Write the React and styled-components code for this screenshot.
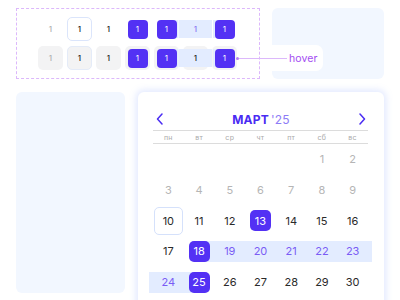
import React from 'react';
import styled, { createGlobalStyle } from 'styled-components';

const PURPLE = '#5331f4';
const BAND = '#e3ecff';
const PANEL = '#f2f7ff';

const GlobalStyle = createGlobalStyle`
  body {
    margin: 0;
    background: #fff;
    font-family: Inter, "Noto Sans", sans-serif;
  }
`;

const Page = styled.div`
  width: 400px;
  height: 300px;
  overflow: hidden;
  box-sizing: border-box;
  padding: 8px 16px 0;
`;

const TopRow = styled.div`
  position: relative;
  display: flex;
  gap: 12px;
  height: 71px;
`;

const DemoBox = styled.div`
  width: 244px;
  box-sizing: border-box;
  border: 1px dashed #dcb8fb;
  padding: 8px 0 0 21px;
  display: flex;
  flex-direction: column;
  gap: 5px;
`;

const DemoRow = styled.div`
  display: flex;
  gap: 4px;
`;

const bandBg = (band, h) => {
  if (band === 'start') return `linear-gradient(${BAND}, ${BAND}) right center / 50% ${h}px no-repeat`;
  if (band === 'end') return `linear-gradient(${BAND}, ${BAND}) left center / 50% ${h}px no-repeat`;
  if (band === 'mid') return BAND;
  return 'none';
};

const DemoCell = styled.div`
  width: 25px;
  height: 24px;
  box-sizing: border-box;
  border-radius: 5px;
  display: flex;
  align-items: center;
  justify-content: center;
  background: ${(p) => bandBg(p.$band, 18)}, ${(p) => (p.$boxed ? '#f3f3f4' : 'transparent')};
  border: 1px solid ${(p) => (p.$outlined ? (p.$boxed ? '#e4ebf8' : '#dbe5fb') : 'transparent')};
`;

const DemoNum = styled.span`
  font-size: 8px;
  font-weight: 500;
  color: ${(p) => (p.$muted ? '#b0b0b0' : '#1c1c1c')};
`;

const DemoMark = styled.span`
  width: 20px;
  height: 19px;
  border-radius: 4px;
  background: ${PURPLE};
  color: #fff;
  font-size: 8px;
  display: flex;
  align-items: center;
  justify-content: center;
`;

const DemoBand = styled.span`
  flex: none;
  width: 33px;
  margin: 0 -4px;
  height: 18px;
  background: ${BAND};
  color: ${(p) => (p.$boxed ? '#1c1c1c' : '#8a78f2')};
  font-size: 8px;
  font-weight: 500;
  display: flex;
  align-items: center;
  justify-content: center;
`;

const SidePanel = styled.div`
  flex: 1;
  background: ${PANEL};
  border-radius: 6px;
`;

const Pill = styled.div`
  position: absolute;
  left: 256px;
  top: 37px;
  width: 51px;
  height: 26px;
  background: #fff;
  border-radius: 0 7px 7px 0;
`;

const Pointer = styled.div`
  position: absolute;
  left: 220px;
  top: 42px;
  height: 16px;
  display: flex;
  align-items: center;
`;

const Dot = styled.span`
  width: 3px;
  height: 3px;
  border-radius: 50%;
  background: #b57cf5;
`;

const Line = styled.span`
  width: 48px;
  height: 1px;
  background: #dcb8fb;
  margin-right: 2px;
`;

const Label = styled.span`
  font-size: 10.5px;
  color: #a34cf2;
  letter-spacing: 0.1px;
`;

const BottomRow = styled.div`
  display: flex;
  gap: 13px;
  margin-top: 13px;
`;

const LeftPanel = styled.div`
  width: 109px;
  height: 201px;
  background: ${PANEL};
  border-radius: 6px;
`;

const Card = styled.div`
  width: 246px;
  height: 230px;
  box-sizing: border-box;
  background: #fff;
  border-radius: 6px;
  box-shadow: 0 0 7px 2px rgba(120, 150, 255, 0.22);
  padding: 21px 16px 0 15px;
`;

const Header = styled.div`
  display: flex;
  align-items: center;
  justify-content: space-between;
  height: 12px;
  padding: 0 2px 0 3px;
  margin-bottom: 5px;
`;

const Title = styled.div`
  font-size: 12px;
  font-weight: 700;
  color: #4a2cf3;
  letter-spacing: 0.2px;

  span {
    font-weight: 400;
    color: #8d7cf6;
    margin-left: 2px;
  }
`;

const Arrow = ({ dir }) => (
  <svg width="7" height="12" viewBox="0 0 7 12">
    <path
      d={dir === 'left' ? 'M6 1 L1.5 6 L6 11' : 'M1 1 L5.5 6 L1 11'}
      fill="none"
      stroke="#4a2cf3"
      strokeWidth="1.5"
      strokeLinecap="round"
      strokeLinejoin="round"
    />
  </svg>
);

const Weekdays = styled.div`
  display: grid;
  grid-template-columns: repeat(7, 1fr);
  border-top: 1px solid #dcdcdc;
  border-bottom: 1px solid #dcdcdc;
  height: 12px;
  align-items: center;
  font-size: 7px;
  letter-spacing: 0.3px;
  color: #aaa;
  text-align: center;
`;

const Dates = styled.div`
  display: grid;
  grid-template-columns: repeat(7, 1fr);
  grid-auto-rows: 30.7px;
`;

const Cell = styled.div`
  display: flex;
  align-items: center;
`;

const Band = styled.div`
  width: 100%;
  height: 21px;
  display: flex;
  align-items: center;
  justify-content: center;
  background: ${(p) => bandBg(p.$band, 21)};
  box-shadow: ${(p) => (p.$edge === 'right' ? `4px 0 0 ${BAND}` : p.$edge === 'left' ? `-4px 0 0 ${BAND}` : 'none')};
`;

const Num = styled.span`
  font-size: 11px;
  display: flex;
  align-items: center;
  justify-content: center;
  box-sizing: border-box;
  color: ${(p) => ({ muted: '#b5b5b5', band: '#7a5cf5', mark: '#fff' }[p.$kind] || '#2a2a2a')};
  ${(p) => p.$kind === 'mark' && `
    width: 21px;
    height: 21px;
    border-radius: 5px;
    background: ${PURPLE};
  `}
  ${(p) => p.$kind === 'today' && `
    width: 29px;
    height: 28px;
    border-radius: 5px;
    border: 1px solid #d5e1fb;
  `}
`;

const weekdays = ['пн', 'вт', 'ср', 'чт', 'пт', 'сб', 'вс'];

const days = [
  ...Array(5).fill(null),
  { n: 1, kind: 'muted' },
  { n: 2, kind: 'muted' },
  ...[3, 4, 5, 6, 7, 8, 9].map((n) => ({ n, kind: 'muted' })),
  { n: 10, kind: 'today' },
  { n: 11 },
  { n: 12 },
  { n: 13, kind: 'mark' },
  { n: 14 },
  { n: 15 },
  { n: 16 },
  { n: 17 },
  { n: 18, kind: 'mark', band: 'start' },
  { n: 19, kind: 'band', band: 'mid' },
  { n: 20, kind: 'band', band: 'mid' },
  { n: 21, kind: 'band', band: 'mid' },
  { n: 22, kind: 'band', band: 'mid' },
  { n: 23, kind: 'band', band: 'mid', edge: 'right' },
  { n: 24, kind: 'band', band: 'mid', edge: 'left' },
  { n: 25, kind: 'mark', band: 'end' },
  { n: 26 },
  { n: 27 },
  { n: 28 },
  { n: 29 },
  { n: 30 },
];

const DemoStates = ({ boxed }) => (
  <DemoRow>
    <DemoCell $boxed={boxed}><DemoNum $muted>1</DemoNum></DemoCell>
    <DemoCell $boxed={boxed} $outlined><DemoNum>1</DemoNum></DemoCell>
    <DemoCell $boxed={boxed}><DemoNum>1</DemoNum></DemoCell>
    <DemoCell $boxed={boxed}><DemoMark>1</DemoMark></DemoCell>
    <DemoCell $boxed={boxed} $band="start"><DemoMark>1</DemoMark></DemoCell>
    <DemoCell $boxed={boxed}><DemoBand $boxed={boxed}>1</DemoBand></DemoCell>
    <DemoCell $boxed={boxed} $band="end"><DemoMark>1</DemoMark></DemoCell>
  </DemoRow>
);

const App = () => (
  <>
    <GlobalStyle />
    <Page>
      <TopRow>
        <DemoBox>
          <DemoStates />
          <DemoStates boxed />
        </DemoBox>
        <SidePanel />
        <Pill />
        <Pointer>
          <Dot />
          <Line />
          <Label>hover</Label>
        </Pointer>
      </TopRow>
      <BottomRow>
        <LeftPanel />
        <Card>
          <Header>
            <Arrow dir="left" />
            <Title>МАРТ<span>'25</span></Title>
            <Arrow dir="right" />
          </Header>
          <Weekdays>
            {weekdays.map((d) => <span key={d}>{d}</span>)}
          </Weekdays>
          <Dates>
            {days.map((d, i) => (
              <Cell key={i}>
                {d && (
                  <Band $band={d.band} $edge={d.edge}>
                    <Num $kind={d.kind}>{d.n}</Num>
                  </Band>
                )}
              </Cell>
            ))}
          </Dates>
        </Card>
      </BottomRow>
    </Page>
  </>
);

export default App;
